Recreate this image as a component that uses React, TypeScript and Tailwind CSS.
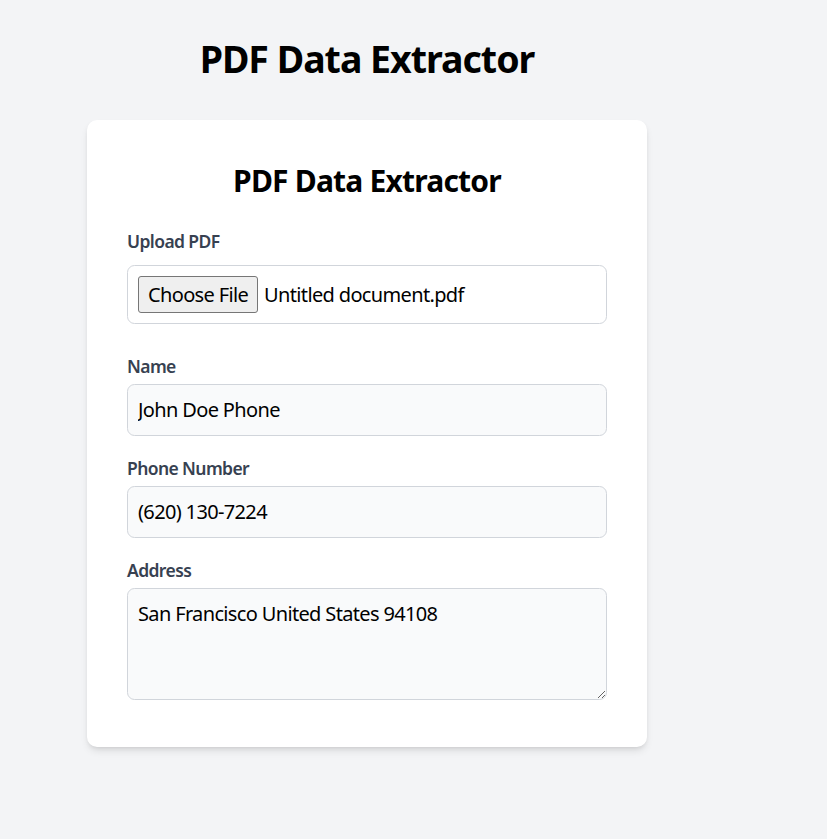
import React from "react";

export default function App() {
  const font = { fontFamily: '"Noto Sans", "Open Sans", Arial, sans-serif' };
  const inputCls =
    "block w-full rounded-[7.5px] border border-[#d1d5db] bg-[#f9fafb] p-[10px] text-[20px] leading-[30px] tracking-[-0.65px] text-black outline-none";
  const labelCls = "block text-[17.5px] font-semibold leading-[25px] tracking-[-0.6px] text-[#374151]";
  return (
    <div className="min-h-[839px] w-full bg-[#f3f4f6]" style={font}>
      <div className="ml-[87px] flex w-[560px] flex-col items-center pt-[36px]">
        <h1 className="mb-[39px] text-[37.5px] font-bold leading-[45px] tracking-[-1px] text-black">PDF Data Extractor</h1>
        <div className="w-full rounded-[10px] bg-white p-[40px] shadow-[0_5px_8px_-2px_rgba(0,0,0,0.12),0_2px_5px_-2px_rgba(0,0,0,0.1)]">
          <h2 className="mb-[28px] pt-[1px] text-center text-[30px] font-bold leading-[40px] tracking-[-0.8px] text-black">PDF Data Extractor</h2>

          <label className={`${labelCls} mb-[11px]`}>Upload PDF</label>
          <div className="mb-[30px] flex items-center rounded-[7.5px] border border-[#d1d5db] bg-white p-[10px]">
            <span className="rounded-[3px] border border-[#767676] bg-[#efefef] px-[9px] py-[3px] text-[20px] leading-[29px] tracking-[-0.65px] text-black">Choose File</span>
            <span className="ml-[6px] text-[20px] leading-[29px] tracking-[-0.65px] text-black">Untitled document.pdf</span>
          </div>

          <label className={`${labelCls} mb-[5px]`}>Name</label>
          <input readOnly value="John Doe Phone" className={`${inputCls} mb-[20px]`} />

          <label className={`${labelCls} mb-[5px]`}>Phone Number</label>
          <input readOnly value="(620) 130-7224" className={`${inputCls} mb-[20px]`} />

          <label className={`${labelCls} mb-[5px]`}>Address</label>
          <textarea readOnly rows={3} defaultValue="San Francisco United States 94108" className={`${inputCls} mb-[7px]`} />
        </div>
      </div>
    </div>
  );
}
